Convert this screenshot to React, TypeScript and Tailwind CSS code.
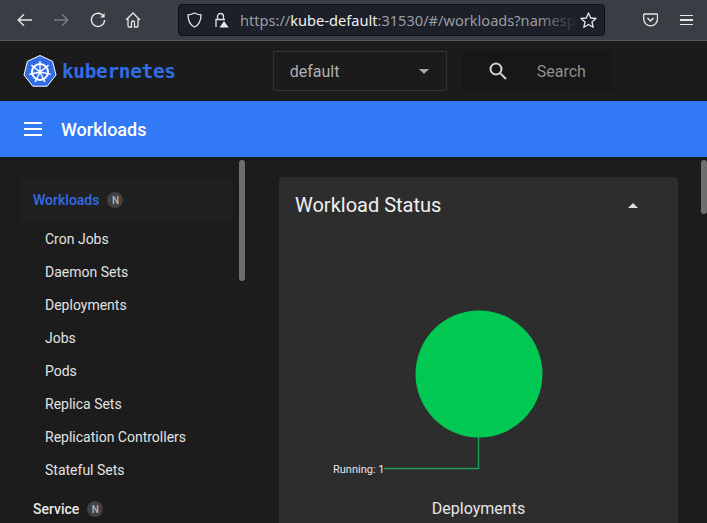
import React from "react";

const roboto = "font-['Roboto',sans-serif]";

function Logo() {
  const spokes = [0, 51.4, 102.8, 154.3, 205.7, 257.1, 308.6];
  return (
    <svg width="34" height="33" viewBox="0 0 34 33" className="shrink-0">
      <path d="M17 .5 29.6 6.3 33 20 24.2 31.2H9.8L1 20 4.4 6.3Z" fill="#326ce5" stroke="#fff" strokeWidth="1" strokeLinejoin="round" />
      <g stroke="#fff" fill="none">
        <circle cx="17" cy="17" r="8" strokeWidth="2" />
        <circle cx="17" cy="17" r="1.6" fill="#fff" stroke="none" />
        {spokes.map((a) => (
          <g key={a} transform={`rotate(${a} 17 17)`}>
            <line x1="17" y1="17" x2="17" y2="6" strokeWidth="1.4" />
          </g>
        ))}
      </g>
    </svg>
  );
}

function Toolbar() {
  return (
    <div className="h-[41px] bg-[#3b3d44] border-b border-[#55575c] flex items-center shrink-0">
      <div className="flex items-center ml-[17px]">
        <svg width="16" height="14" viewBox="0 0 16 14" fill="none" stroke="#e6e6e9" strokeWidth="1.4"><path d="M15 7H1.5M7 1.2 1.2 7 7 12.8" /></svg>
        <svg width="16" height="14" viewBox="0 0 16 14" fill="none" stroke="#7c7e84" strokeWidth="1.4" className="ml-[20px]"><path d="M1 7h13.5M9 1.2 14.8 7 9 12.8" /></svg>
        <svg width="16" height="16" viewBox="0 0 16 16" fill="none" stroke="#e6e6e9" strokeWidth="1.4" className="ml-[21px]"><path d="M13.5 4.2A6.6 6.6 0 1 0 14.6 8" /><path d="M14.6 1v4.4h-4.4" fill="#e6e6e9" stroke="none" /></svg>
        <svg width="16" height="16" viewBox="0 0 16 16" fill="none" stroke="#e6e6e9" strokeWidth="1.3" className="ml-[19px]"><path d="M1 8 8 1l7 7M3 6.5V14a1 1 0 0 0 1 1h2.5v-4.5a1.5 1.5 0 0 1 3 0V15H12a1 1 0 0 0 1-1V6.5" /></svg>
      </div>
      <div className="ml-[37px] w-[427px] h-[32px] bg-[#1d2028] border border-[#0f1115] rounded-[4px] flex items-center shrink-0">
        <svg width="15" height="16" viewBox="0 0 15 16" fill="none" stroke="#e6e6e9" strokeWidth="1.3" className="ml-[8px] shrink-0"><path d="M7.5 1C5.5 2.2 3.5 2.7 1 2.8c0 5 .8 9.6 6.5 12.2C13.2 12.4 14 7.8 14 2.8 11.5 2.7 9.5 2.2 7.5 1Z" /></svg>
        <svg width="16" height="16" viewBox="0 0 16 16" className="ml-[11px] shrink-0">
          <path d="M3 15V7.5h9M4.5 7.5V4.5a3 3 0 0 1 6 0v3" fill="none" stroke="#e6e6e9" strokeWidth="1.3" />
          <path d="M11 9l4.7 6.5H6.5Z" fill="#e6e6e9" />
        </svg>
        <div className="ml-[11px] text-[14.6px] font-['Noto_Sans',sans-serif] whitespace-nowrap overflow-hidden w-[338px] text-[#9a9ca3] relative leading-[30px]">
          https://<span className="text-[#f1f1f3]">kube-default</span>:31530/#/workloads?namespace=default
          <div className="absolute right-0 top-0 bottom-0 w-[40px] bg-gradient-to-r from-transparent to-[#1d2028]" />
        </div>
        <svg width="17" height="17" viewBox="0 0 17 17" fill="none" stroke="#e6e6e9" strokeWidth="1.3" className="ml-auto mr-[7px] shrink-0"><path d="m8.5 1 2.2 5 5.3.5-4 3.5 1.2 5.3-4.700-2.800-4.700 2.800L5 10 1 6.500 6.300 6Z" strokeLinejoin="round" /></svg>
      </div>
      <svg width="15" height="14" viewBox="0 0 15 14" fill="none" stroke="#e6e6e9" strokeWidth="1.3" className="ml-[38px] shrink-0"><path d="M1.5 1h12a1 1 0 0 1 1 1v4a6.900 6.900 0 0 1-13.800 0V2a.8.8 0 0 1 .8-1Z" /><path d="m4.500 5 3 3 3-3" strokeWidth="1.5" /></svg>
      <div className="ml-[22px] w-[13px] flex flex-col gap-[3px]">
        <div className="h-[1.5px] bg-[#e6e6e9]" /><div className="h-[1.5px] bg-[#e6e6e9]" /><div className="h-[1.5px] bg-[#e6e6e9]" />
      </div>
    </div>
  );
}

function Header() {
  return (
    <div className="h-[60px] bg-[#1b1b1b] flex items-center shrink-0">
      <div className="ml-[23px] flex items-center gap-[5px]">
        <Logo />
        <span className="text-[#326ce5] font-bold text-[19.4px] font-['DejaVu_Sans_Mono',monospace] tracking-[-0.3px] pt-[1px]">kubernetes</span>
      </div>
      <div className="ml-[97px] w-[174px] h-[40px] border border-[#333333] flex items-center text-[16px] text-[#b0b0b0] pl-[16px] pt-[1px] rounded-[1px] relative">
        <span className={roboto}>default</span>
        <div className="absolute left-[145px] top-[17px] w-0 h-0 border-l-[5px] border-r-[5px] border-t-[5px] border-l-transparent border-r-transparent border-t-[#a6a6a6]" />
      </div>
      <div className="ml-[15px] w-[150px] h-[40px] bg-[#171717] flex items-center rounded-[2px]">
        <svg width="18" height="18" viewBox="0 0 18 18" fill="none" stroke="#d2d2d2" strokeWidth="2" className="ml-[27px]"><circle cx="7" cy="7" r="5.5" /><path d="m11 11 6 6" /></svg>
        <span className={`${roboto} ml-[30px] pt-[1px] text-[16px] text-[#8f8f8f]`}>Search</span>
      </div>
    </div>
  );
}

function Badge() {
  return <span className="ml-[8px] w-[16px] h-[16px] rounded-full bg-[#414141] text-[#b8b8b8] text-[10px] font-medium flex items-center justify-center">N</span>;
}

const items = ["Cron Jobs", "Daemon Sets", "Deployments", "Jobs", "Pods", "Replica Sets", "Replication Controllers", "Stateful Sets"];

function Sidebar() {
  return (
    <div className={`${roboto} w-[248px] shrink-0 bg-[#1c1c1c] relative overflow-hidden pt-[21px] pl-[21px]`}>
      <div className="w-[212px] h-[44px] bg-[#202020] flex items-center pl-[12px] text-[14px] font-medium text-[#326ce5] rounded-[2px]">
        Workloads<Badge />
      </div>
      <div className="flex flex-col mt-[0.5px]">
        {items.map((t) => (
          <div key={t} className="h-[33px] flex items-center pl-[24px] text-[14px] text-[#e2e2e2]">{t}</div>
        ))}
      </div>
      <div className="flex items-center pl-[12px] h-[44px] mt-[0.5px] text-[14px] font-medium text-[#e8e8e8]">
        Service<Badge />
      </div>
      <div className="absolute left-[239px] top-[3px] w-[6px] h-[121px] rounded-[3px] bg-[#6e6e6e]" />
    </div>
  );
}

function Main() {
  return (
    <div className={`${roboto} flex-1 bg-[#1c1c1c] relative overflow-hidden`}>
      <div className="ml-[31px] mt-[20px] w-[399px] h-[400px] bg-[#2d2d2d] rounded-[4px] relative">
        <div className="flex items-center h-[56px] pl-[16px] text-[20px] text-[#f0f0f0]">Workload Status</div>
        <div className="absolute left-[349px] top-[26px] w-0 h-0 border-l-[5px] border-r-[5px] border-b-[5px] border-l-transparent border-r-transparent border-b-[#dddddd]" />
        <div className="relative h-[340px]">
          <svg width="399" height="260" viewBox="0 0 399 260" className="absolute left-0 top-0">
            <path d="M199.5 200V235.5H105" fill="none" stroke="#1f9d55" strokeWidth="1.5" />
            <circle cx="200" cy="141" r="63.5" fill="#00c853" />
          </svg>
          <span className="absolute left-[54px] top-[230px] text-[11px] leading-[13px] text-[#e6e6e6]">Running: 1</span>
          <div className="absolute left-0 right-0 top-[266px] text-center text-[16px] leading-[20px] text-[#e6e6e6]">Deployments</div>
        </div>
      </div>
      <div className="absolute left-[453px] top-[3px] w-[6px] h-[54px] rounded-[3px] bg-[#6e6e6e]" />
    </div>
  );
}

export default function App() {
  return (
    <div className="w-[707px] h-[523px] overflow-hidden flex flex-col bg-[#1c1c1c]">
      <Toolbar />
      <Header />
      <div className={`${roboto} h-[56px] bg-[#3179f5] flex items-center shrink-0 pl-[24px] text-white`}>
        <div className="w-[18px] flex flex-col gap-[4px]">
          <div className="h-[2px] bg-white" /><div className="h-[2px] bg-white" /><div className="h-[2px] bg-white" />
        </div>
        <span className="ml-[19px] text-[18px] font-medium">Workloads</span>
      </div>
      <div className="flex flex-1 min-h-0">
        <Sidebar />
        <Main />
      </div>
    </div>
  );
}
